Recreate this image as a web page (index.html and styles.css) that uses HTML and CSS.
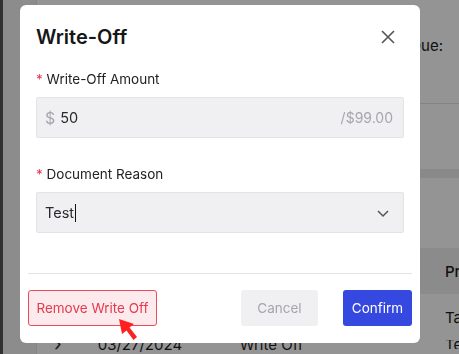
FILE: index.html
```html
<!DOCTYPE html>
<html lang="en">
<head>
    <meta charset="UTF-8">
    <meta name="viewport" content="width=device-width, initial-scale=1.0">
    <title>Write-Off</title>
    <link rel="stylesheet" href="styles.css">
</head>
<body>

    <!-- Page behind the modal -->
    <div class="page">
        <aside class="side-strip"></aside>
        <div class="side-panel"></div>
        <main class="content">
            <div class="summary">
                <span class="due">Amount Due:</span>
            </div>
            <div class="band"></div>
            <div class="table-head">
                <span class="col-product">Product</span>
            </div>
            <div class="table-row">
                <span class="col-product">Tax</span>
            </div>
            <div class="table-row last">
                <span class="chev">&#8250;</span>
                <span class="col-date">03/27/2024</span>
                <span class="col-type">Write Off</span>
                <span class="col-product">Text</span>
            </div>
        </main>
    </div>

    <!-- Modal -->
    <div class="overlay">
        <div class="modal">
            <div class="modal-header">
                <h2>Write-Off</h2>
                <button class="close-btn" aria-label="Close">
                    <svg width="16" height="16" viewBox="0 0 16 16">
                        <path d="M2 2 L14 14 M14 2 L2 14" stroke="#555" stroke-width="1.6" fill="none"/>
                    </svg>
                </button>
            </div>

            <div class="modal-body">
                <label class="field-label"><span class="req">*</span> Write-Off Amount</label>
                <div class="field">
                    <span class="prefix">$</span>
                    <span class="value">50</span>
                    <span class="suffix">/$99.00</span>
                </div>

                <label class="field-label second"><span class="req">*</span> Document Reason</label>
                <div class="field select">
                    <span class="value">Test</span><span class="caret"></span>
                    <svg class="chevron" width="14" height="14" viewBox="0 0 14 14">
                        <path d="M2 5 L7 10 L12 5" stroke="#555" stroke-width="1.5" fill="none"/>
                    </svg>
                </div>
            </div>

            <div class="divider"></div>

            <div class="modal-footer">
                <button class="btn btn-danger">Remove Write Off</button>
                <div class="footer-right">
                    <button class="btn btn-muted">Cancel</button>
                    <button class="btn btn-primary">Confirm</button>
                </div>
            </div>
        </div>
    </div>

    <!-- Pointer arrow -->
    <svg class="pointer" width="24" height="26" viewBox="0 0 24 26">
        <path d="M1 1 L16 6 L11.5 9.5 L19 19 L15.5 22 L8.5 12.5 L4 16 Z" fill="#ff2020"/>
    </svg>

</body>
</html>
```

FILE: styles.css
```css
/* General Styles */
html, body {
    margin: 0;
    height: 100%;
}

body {
    font-family: Inter, "Noto Sans", Arial, sans-serif;
    color: #1c1c1e;
    overflow: hidden;
    background: #fff;
}

/* Page behind */
.page {
    display: flex;
    height: 100%;
}

.side-strip {
    width: 3px;
    background: #555;
}

.side-panel {
    width: 33px;
    background: #f2f2f2;
    border-right: 1px solid #e4e4e4;
}

.content {
    flex: 1;
    display: flex;
    flex-direction: column;
    font-size: 14px;
}

.summary {
    height: 104px;
    border-bottom: 1px solid #e2e2e2;
    position: relative;
}

.due {
    position: absolute;
    right: 16px;
    top: 36px;
    font-size: 15px;
    color: #222;
    white-space: nowrap;
}

.band {
    margin-top: 65px;
    height: 10px;
    background: #ececec;
}

.table-head {
    margin-top: 70px;
    height: 46px;
    background: #f0f0f0;
    display: flex;
    align-items: center;
    font-weight: 500;
}

.table-row {
    height: 47px;
    display: flex;
    align-items: center;
}

.table-row.last {
    height: 14px;
    align-items: flex-start;
    font-size: 15px;
    line-height: 9px;
}

.col-product {
    margin-left: auto;
    width: 14px;
    overflow: hidden;
    white-space: nowrap;
    font-size: 15px;
}

.chev {
    margin-left: 17px;
    font-size: 20px;
    color: #333;
}

.col-date {
    margin-left: 36px;
    width: 142px;
}

.col-type {
    width: 100px;
}

/* Overlay */
.overlay {
    position: fixed;
    inset: 0;
    background: rgba(0, 0, 0, 0.42);
    padding: 5px 0 0 20px;
}

/* Modal */
.modal {
    width: 400px;
    background: #fff;
    border-radius: 6px;
    display: flex;
    flex-direction: column;
    box-sizing: border-box;
    padding-bottom: 17px;
}

.modal-header {
    display: flex;
    align-items: center;
    justify-content: space-between;
    padding: 19px 24px 0 16px;
    height: 26px;
}

.modal-header h2 {
    margin: 0;
    font-size: 20px;
    font-weight: 600;
    line-height: 26px;
    color: #161618;
}

.close-btn {
    border: none;
    background: none;
    padding: 0;
    width: 16px;
    height: 16px;
    cursor: pointer;
}

.modal-body {
    padding: 19px 16px 0;
    display: flex;
    flex-direction: column;
}

.field-label {
    font-size: 13.5px;
    line-height: 20px;
    color: #222;
    margin-bottom: 8px;
}

.field-label.second {
    margin-top: 26px;
}

.req {
    color: #e8384f;
}

.field {
    height: 41px;
    box-sizing: border-box;
    border: 1px solid #e3e3e6;
    background: #f0f0f2;
    border-radius: 2px;
    display: flex;
    align-items: center;
    padding: 0 10px 0 8px;
    font-size: 14.5px;
}

.prefix {
    color: #a6a6ad;
    font-size: 16px;
    margin-right: 5px;
}

.value {
    color: #2a2a2e;
}

.suffix {
    margin-left: auto;
    color: #a6a6ad;
    font-size: 14px;
}

.caret {
    width: 1px;
    height: 18px;
    background: #111;
    margin-left: 1px;
}

.chevron {
    margin-left: auto;
    margin-right: 3px;
}

.divider {
    height: 1px;
    background: #e3e3e6;
    margin: 40px 8px 16px;
}

/* Footer */
.modal-footer {
    display: flex;
    justify-content: space-between;
    padding: 0 8px;
}

.footer-right {
    display: flex;
    gap: 25px;
}

.btn {
    height: 36px;
    border-radius: 3px;
    font-family: inherit;
    font-size: 13.5px;
    padding: 0;
    white-space: nowrap;
    cursor: pointer;
}

.btn-danger {
    background: #fdeaed;
    border: 1px solid #ec4b5c;
    color: #e23c4f;
    width: 129px;
}

.btn-muted {
    background: #f0f0f2;
    border: none;
    color: #a5a5ac;
    width: 77px;
}

.btn-primary {
    background: #3549e0;
    border: none;
    color: #fff;
    width: 69px;
}

/* Pointer */
.pointer {
    position: fixed;
    left: 118px;
    top: 318px;
}
```
